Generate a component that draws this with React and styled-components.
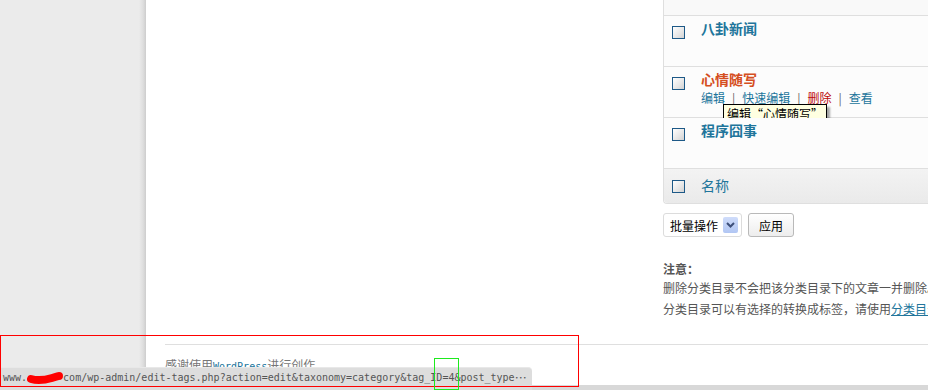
import styled, { createGlobalStyle } from "styled-components";

const GlobalStyle = createGlobalStyle`
  html, body {
    margin: 0;
    padding: 0;
  }
  body {
    width: 928px;
    height: 390px;
    overflow: hidden;
    background: #fff;
    font-family: "Noto Sans CJK SC", "Liberation Sans", sans-serif;
  }
`

const Page = styled.div`
  position: relative;
  display: flex;
  width: 928px;
  height: 390px;
  overflow: hidden;
`

const Sidebar = styled.div`
  width: 146px;
  flex-shrink: 0;
  background: linear-gradient(to right, #ebebeb 0, #ebebeb 139px, #dedede 143px, #cdcdcd 146px);
`

const Main = styled.div`
  flex: 1;
  min-width: 0;
  display: flex;
  flex-direction: column;
  padding-left: 19px;
`

const Columns = styled.div`
  display: flex;
  height: 344px;
`

const ColLeft = styled.div`
  width: 498px;
  flex-shrink: 0;
`

const ColRight = styled.div`
  width: 420px;
  flex-shrink: 0;
`

const Table = styled.div`
  border: 1px solid #dfdfdf;
  border-top: none;
  border-right: none;
  border-radius: 0 0 0 4px;
  background: #fcfcfc;
`

const HeadRow = styled.div`
  height: 15px;
  background: #f9f9f9;
  border-bottom: 1px solid #dfdfdf;
`

const Row = styled.div`
  position: relative;
  display: flex;
  height: ${p => p.$h || 50}px;
  border-bottom: ${p => p.$last ? "none" : "1px solid #dfdfdf"};
  background: ${p => p.$foot ? "linear-gradient(#f3f3f3, #eaeaea)" : "#fcfcfc"};
  border-radius: ${p => p.$last ? "0 0 0 4px" : "0"};
`

const CheckCell = styled.div`
  width: 37px;
  flex-shrink: 0;
  box-sizing: border-box;
  padding-left: 8px;
  padding-top: ${p => p.$top || 10}px;
`

const Check = styled.span`
  display: block;
  box-sizing: border-box;
  width: 13px;
  height: 13px;
  border: 1px solid #1d5987;
  background: linear-gradient(135deg, #ffffff 0%, #e6e6e6 60%, #d2d2d2 100%);
`

const NameCell = styled.div`
  padding-top: ${p => p.$top || 3}px;
`

const Title = styled.a`
  display: block;
  font-size: 14px;
  line-height: 18px;
  font-weight: ${p => p.$plain ? 400 : 700};
  color: ${p => p.$hot ? "#d54e21" : "#21759b"};
  text-decoration: none;
`

const Actions = styled.div`
  margin-top: 2px;
  font-size: 12px;
  line-height: 16px;
  color: #21759b;
  white-space: nowrap;
`

const ActionLink = styled.a`
  color: ${p => p.$danger ? "#bc0b0b" : "#21759b"};
  text-decoration: none;
`

const Sep = styled.span`
  color: #666;
  margin: 0 7px;
`

const Tooltip = styled.div`
  position: absolute;
  left: 59px;
  top: 37px;
  box-sizing: border-box;
  height: 19px;
  padding: 0 3px;
  background: #ffffe1;
  border: 1px solid #000;
  box-shadow: 3px 3px 2px rgba(0, 0, 0, 0.35);
  font-size: 12px;
  line-height: 17px;
  color: #000;
  white-space: nowrap;
`

const BulkBar = styled.div`
  display: flex;
  gap: 6px;
  margin-top: 9px;
`

const Select = styled.div`
  display: flex;
  align-items: center;
  justify-content: space-between;
  box-sizing: border-box;
  width: 79px;
  height: 24px;
  padding: 0 3px 0 6px;
  border: 1px solid #dcdcdc;
  border-radius: 3px;
  background: #fff;
  font-size: 12px;
  color: #000;
  white-space: nowrap;
`

const Arrow = styled.span`
  display: flex;
  align-items: center;
  justify-content: center;
  width: 15px;
  height: 16px;
  border-radius: 2px;
  background: linear-gradient(#cfdcfa, #b1c6f3);
`

const Button = styled.button`
  box-sizing: border-box;
  width: 46px;
  height: 24px;
  padding: 0;
  border: 1px solid #b9b9b9;
  border-radius: 3px;
  background: linear-gradient(#ffffff, #ededed);
  font-family: inherit;
  font-size: 12px;
  color: #000;
`

const Note = styled.div`
  margin-top: 24px;
  font-size: 12px;
  color: #555;
  white-space: nowrap;
`

const NoteTitle = styled.strong`
  display: block;
  line-height: 16px;
  color: #555;
`

const NoteLine = styled.p`
  margin: 0;
  line-height: 21px;
  color: #555;
`

const Link = styled.a`
  color: #21759b;
  text-decoration: underline;
`

const Footer = styled.div`
  border-top: 1px solid #dfdfdf;
  padding-top: 12px;
  font-size: 12px;
  line-height: 16px;
  color: #777;
`

const MonoLink = styled.a`
  font-family: "DejaVu Sans Mono", monospace;
  font-size: 10px;
  color: #21759b;
  text-decoration: none;
`

const StatusBar = styled.div`
  position: absolute;
  left: 0;
  bottom: 0;
  display: flex;
  align-items: center;
  box-sizing: border-box;
  width: 532px;
  height: 23px;
  padding: 0 0 3px 3px;
  background: #dddddd;
  border-top: 1px solid #e8e8e8;
  border-top-right-radius: 4px;
  font-family: "DejaVu Sans Mono", monospace;
  font-size: 10px;
  color: #555;
  white-space: nowrap;
`

const Ellipsis = styled.span`
  font-family: "Noto Sans CJK SC", sans-serif;
  font-size: 12px;
`

const BottomEdge = styled.div`
  position: absolute;
  left: 0;
  right: 0;
  bottom: 0;
  height: 5px;
  background: #d8d8d8;
`

const Mark = styled.div`
  position: absolute;
  left: ${p => p.$x}px;
  top: ${p => p.$y}px;
  width: ${p => p.$w}px;
  height: ${p => p.$h}px;
  box-sizing: border-box;
  border: 1px solid ${p => p.$c};
  pointer-events: none;
`

function Scribble() {
  return (
    <svg width="36" height="14" viewBox="0 0 36 14">
      <path
        d="M4 8 C11 10 18 9 25 7 S31 5 32 5"
        stroke="#ff0000"
        strokeWidth="8"
        strokeLinecap="round"
        fill="none"
      />
    </svg>
  )
}

function Chevron() {
  return (
    <svg width="9" height="6" viewBox="0 0 9 6">
      <path d="M1 1 L4.5 4.5 L8 1" stroke="#3d4f7a" strokeWidth="2" fill="none" />
    </svg>
  )
}

function App() {
  return (
    <>
      <GlobalStyle />
      <Page>
        <Sidebar />
        <Main>
          <Columns>
            <ColLeft />
            <ColRight>
              <Table>
                <HeadRow />
                <Row>
                  <CheckCell><Check /></CheckCell>
                  <NameCell>
                    <Title>八卦新闻</Title>
                  </NameCell>
                </Row>
                <Row>
                  <CheckCell><Check /></CheckCell>
                  <NameCell>
                    <Title $hot>心情随写</Title>
                    <Actions>
                      <ActionLink>编辑</ActionLink>
                      <Sep>|</Sep>
                      <ActionLink>快速编辑</ActionLink>
                      <Sep>|</Sep>
                      <ActionLink $danger>删除</ActionLink>
                      <Sep>|</Sep>
                      <ActionLink>查看</ActionLink>
                    </Actions>
                  </NameCell>
                  <Tooltip>编辑“心情随写”</Tooltip>
                </Row>
                <Row>
                  <CheckCell><Check /></CheckCell>
                  <NameCell>
                    <Title>程序囧事</Title>
                  </NameCell>
                </Row>
                <Row $h={34} $foot $last>
                  <CheckCell $top={11}><Check /></CheckCell>
                  <NameCell $top={7}>
                    <Title $plain>名称</Title>
                  </NameCell>
                </Row>
              </Table>
              <BulkBar>
                <Select>
                  批量操作
                  <Arrow><Chevron /></Arrow>
                </Select>
                <Button>应用</Button>
              </BulkBar>
              <Note>
                <NoteTitle>注意：</NoteTitle>
                <NoteLine>删除分类目录不会把该分类目录下的文章一并删除。</NoteLine>
                <NoteLine>
                  分类目录可以有选择的转换成标签，请使用<Link>分类目录到标签转换器</Link>。
                </NoteLine>
              </Note>
            </ColRight>
          </Columns>
          <Footer>
            感谢使用<MonoLink>WordPress</MonoLink>进行创作
          </Footer>
        </Main>
        <BottomEdge />
        <StatusBar>
          www.<Scribble />com/wp-admin/edit-tags.php?action=edit&amp;taxonomy=category&amp;tag_ID=4&amp;post_type<Ellipsis>…</Ellipsis>
        </StatusBar>
        <Mark $x={0} $y={335} $w={579} $h={52} $c="#ff0000" />
        <Mark $x={434} $y={358} $w={25} $h={32} $c="#1eea1e" />
      </Page>
    </>
  )
}

export default App
